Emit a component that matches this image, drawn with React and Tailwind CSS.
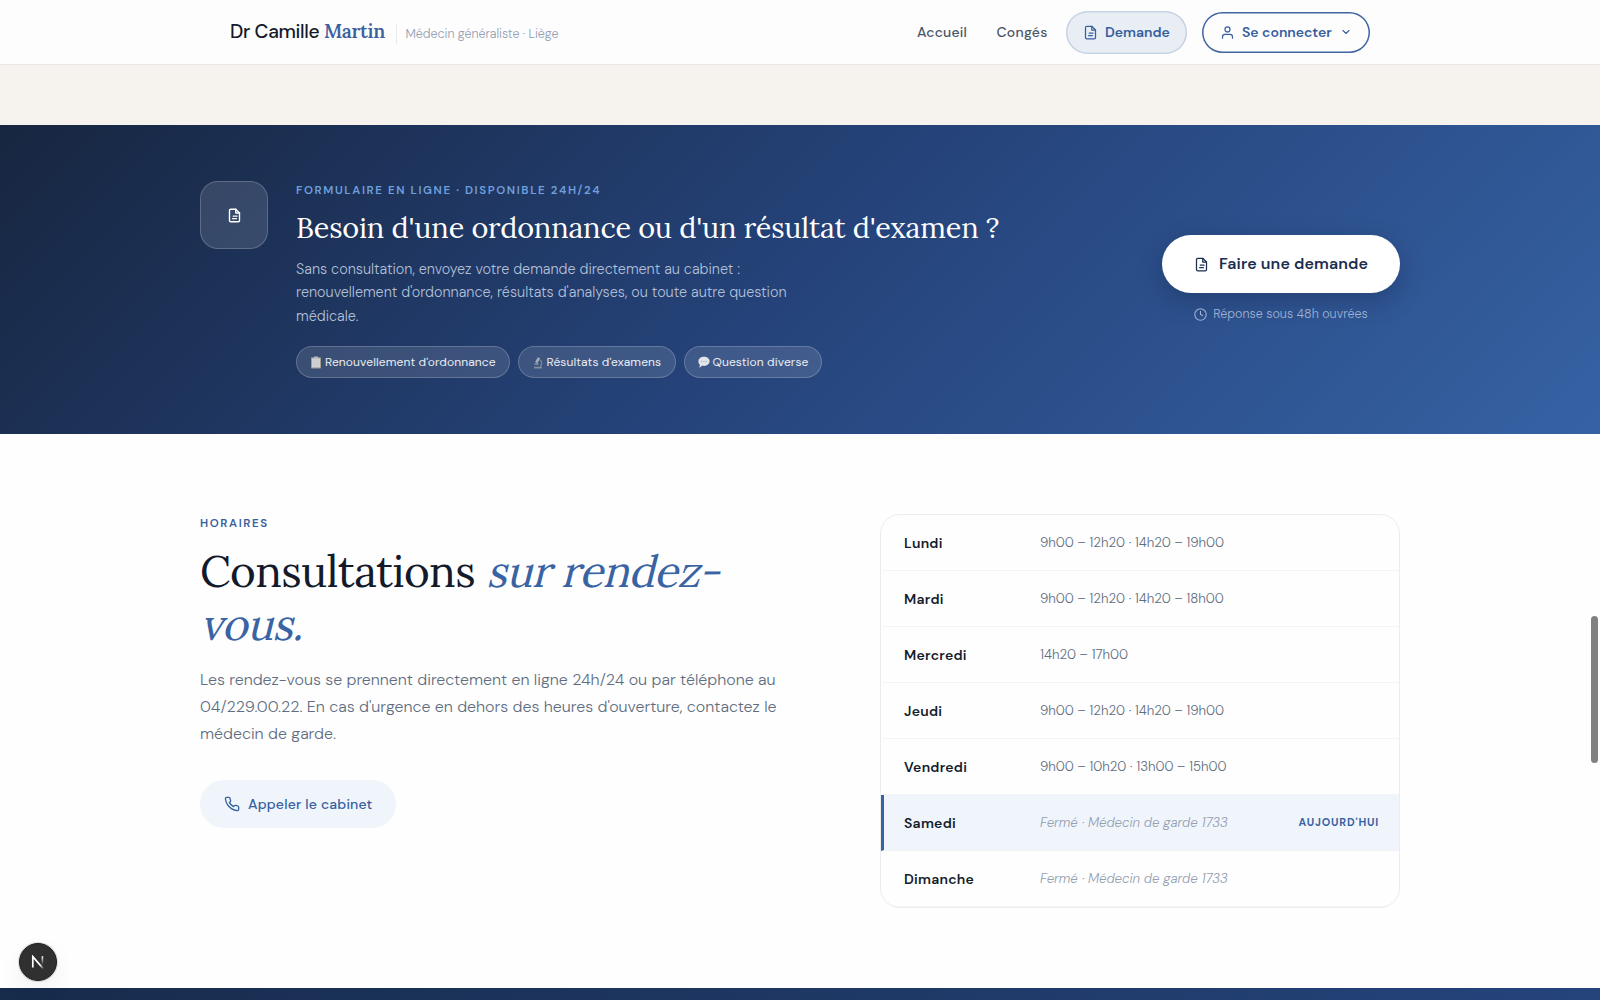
import React from "react";

function FileIcon({ size = 16, stroke = 2, className = "" }) {
  return (
    <svg width={size} height={size} viewBox="0 0 24 24" fill="none" stroke="currentColor" strokeWidth={stroke} strokeLinecap="round" strokeLinejoin="round" className={className}>
      <path d="M14 2H6a2 2 0 0 0-2 2v16a2 2 0 0 0 2 2h12a2 2 0 0 0 2-2V8z" />
      <path d="M14 2v6h6" />
      <path d="M10 13h6M9 17h6" />
    </svg>
  );
}

function UserIcon() {
  return (
    <svg width="15" height="15" viewBox="0 0 24 24" fill="none" stroke="currentColor" strokeWidth="2" strokeLinecap="round" strokeLinejoin="round">
      <path d="M20 21v-2a4 4 0 0 0-4-4H8a4 4 0 0 0-4 4v2" />
      <circle cx="12" cy="7" r="4" />
    </svg>
  );
}

function ChevronIcon() {
  return (
    <svg width="12" height="12" viewBox="0 0 24 24" fill="none" stroke="currentColor" strokeWidth="2.2" strokeLinecap="round" strokeLinejoin="round">
      <path d="M6 9l6 6 6-6" />
    </svg>
  );
}

function ClockIcon() {
  return (
    <svg width="13" height="13" viewBox="0 0 24 24" fill="none" stroke="currentColor" strokeWidth="2" strokeLinecap="round" strokeLinejoin="round">
      <circle cx="12" cy="12" r="10.5" />
      <path d="M12 6v6l4 2" />
    </svg>
  );
}

function PhoneIcon() {
  return (
    <svg width="16" height="16" viewBox="0 0 24 24" fill="none" stroke="currentColor" strokeWidth="2" strokeLinecap="round" strokeLinejoin="round">
      <path d="M22 16.92v3a2 2 0 0 1-2.18 2 19.79 19.79 0 0 1-8.63-3.07 19.5 19.5 0 0 1-6-6 19.79 19.79 0 0 1-3.07-8.67A2 2 0 0 1 4.11 2h3a2 2 0 0 1 2 1.72 12.84 12.84 0 0 0 .7 2.81 2 2 0 0 1-.45 2.11L8.09 9.91a16 16 0 0 0 6 6l1.27-1.27a2 2 0 0 1 2.11-.45 12.84 12.84 0 0 0 2.81.7A2 2 0 0 1 22 16.92z" />
    </svg>
  );
}

function ClipboardEmoji() {
  return (
    <svg width="12" height="13" viewBox="0 0 12 13">
      <rect x="1" y="1.2" width="10" height="11.2" rx="0.9" fill="#a39d94" />
      <rect x="2" y="2.4" width="8" height="9" fill="#d0d2d4" />
      <rect x="4" y="0.5" width="4" height="2" rx="0.6" fill="#b9bcc2" />
      <path d="M3 5h6M3 7h6M3 9h6" stroke="#c0c3c8" strokeWidth="0.5" />
    </svg>
  );
}

function MicroscopeEmoji() {
  return (
    <svg width="12" height="13" viewBox="0 0 12 13" fill="none">
      <path d="M5.8 1.2l2.4 1.4-2.9 4.6-2.2-1.3z" fill="#a7adb8" />
      <path d="M8 4.2c2 1 2.4 4.4 0.2 6.2" stroke="#7f8795" strokeWidth="1.3" />
      <path d="M2.6 8h4" stroke="#b5bac4" strokeWidth="1" />
      <path d="M2 11.6h8" stroke="#858d9a" strokeWidth="1.8" />
    </svg>
  );
}

function BubbleEmoji() {
  return (
    <svg width="12" height="13" viewBox="0 0 12 13">
      <path d="M6 0.8c3.2 0 5.6 1.9 5.6 4.5S9.2 9.9 6 9.9c-.8 0-1.4-.1-2-.3-.6.9-1.6 1.7-2.9 1.9.6-.8.8-1.700.7-2.700C.9 8 .4 6.700.4 5.300.4 2.700 2.800.8 6 .8z" fill="#e3e5e8" />
      <circle cx="3.6" cy="5.4" r="0.6" fill="#a2a8b3" />
      <circle cx="6" cy="5.4" r="0.6" fill="#a2a8b3" />
      <circle cx="8.4" cy="5.4" r="0.6" fill="#a2a8b3" />
    </svg>
  );
}

function Header() {
  return (
    <header className="h-[65px] shrink-0 border-b border-[#e9e8e8] bg-[#fdfdfe]">
      <div className="mx-auto flex h-[63px] w-[1140px] items-center justify-between">
        <div className="flex items-center">
          <div className="w-[155.500px] whitespace-nowrap text-[19.2px] font-medium leading-none tracking-[-0.32px] text-[#121a2b]">
            Dr Camille <span className="font-['Lora',serif] font-semibold text-[#3a619f]">Martin</span>
          </div>
          <div className="ml-[10px] mt-[5px] flex h-[20px] items-center whitespace-nowrap border-l border-[#e6e9ee] pl-[9px] text-[12.5px] font-light tracking-[-0.03px] text-[#94a0b3]">Médecin généraliste · Liège</div>
        </div>
        <nav className="flex items-center whitespace-nowrap pt-px text-[14px]">
          <span className="w-[79.5px] font-medium tracking-[0.2px] text-[#4a5567]">Accueil</span>
          <span className="w-[69.5px] font-medium tracking-[0.23px] text-[#4a5567]">Congés</span>
          <span className="flex h-[43px] w-[121px] items-center gap-[7px] rounded-full bg-[#e9eef5] pl-[17px] font-semibold text-[#36609f] shadow-[inset_0_0_0_1.5px_#c6d3e4]">
            <FileIcon size={15} />
            Demande
          </span>
          <span className="ml-[15px] flex h-[41px] w-[168px] items-center rounded-full pl-[18px] font-semibold text-[#36609f] shadow-[inset_0_0_0_1.5px_#3f64a0]">
            <UserIcon />
            <span className="ml-[7px]">Se connecter</span>
            <span className="ml-[8px]"><ChevronIcon /></span>
          </span>
        </nav>
      </div>
    </header>
  );
}

function Chip({ icon, label, className }) {
  return (
    <span className={"flex h-8 items-center gap-[3px] whitespace-nowrap rounded-full border border-white/20 bg-white/12 pl-[13px] text-[12px] tracking-[0.12px] text-white/90 " + className}>
      {icon}
      {label}
    </span>
  );
}

function RequestBanner() {
  return (
    <section className="h-[309px] shrink-0 bg-[linear-gradient(135deg,#172640_0%,#25437a_50%,#3662a4_100%)]">
      <div className="mx-auto flex h-full w-[1200px] items-center justify-between">
        <div className="flex items-start gap-7">
          <div className="flex h-[68px] w-[68px] items-center justify-center rounded-[18px] border border-white/20 bg-white/12 text-white">
            <FileIcon size={15} stroke={2.2} />
          </div>
          <div className="h-[197px]">
            <p className="mt-[1px] text-[11.52px] font-semibold leading-[17px] tracking-[1.61px] text-[#6f9fdc]">FORMULAIRE EN LIGNE · DISPONIBLE 24H/24</p>
            <h2 className="mt-[9.5px] whitespace-nowrap font-['Lora',serif] text-[28.8px] leading-[38px] tracking-[-0.19px] text-white">Besoin d'une ordonnance ou d'un résultat d'examen ?</h2>
            <p className="mt-[11px] w-[520px] text-[14.4px] font-light leading-[23.7px] text-[#b1bfd6]">
              Sans consultation, envoyez votre demande directement au cabinet :
              renouvellement d'ordonnance, résultats d'analyses, ou toute autre question
              médicale.
            </p>
            <div className="mt-[17.4px] flex gap-2">
              <Chip icon={<ClipboardEmoji />} label="Renouvellement d'ordonnance" className="w-[213.5px]" />
              <Chip icon={<MicroscopeEmoji />} label="Résultats d'examens" className="w-[158px]" />
              <Chip icon={<BubbleEmoji />} label="Question diverse" className="w-[138px]" />
            </div>
          </div>
        </div>
        <div className="flex w-[238px] flex-col items-center">
          <button className="flex h-[58px] w-[238px] items-center whitespace-nowrap rounded-full bg-white pl-[32px] text-[16px] font-semibold tracking-[0.12px] text-[#1b2d50] shadow-[0_8px_24px_rgba(10,20,45,0.25)]">
            <FileIcon size={15} />
            <span className="ml-[10px]">Faire une demande</span>
          </button>
          <div className="mt-[12px] flex items-center gap-[6px] whitespace-nowrap text-[12.5px] font-light tracking-[0.03px] text-[#9fb2d3]">
            <ClockIcon />
            Réponse sous 48h ouvrées
          </div>
        </div>
      </div>
    </section>
  );
}

const HOURS = [
  { day: "Lundi", hours: "9h00 – 12h20 · 14h20 – 19h00" },
  { day: "Mardi", hours: "9h00 – 12h20 · 14h20 – 18h00" },
  { day: "Mercredi", hours: "14h20 – 17h00" },
  { day: "Jeudi", hours: "9h00 – 12h20 · 14h20 – 19h00" },
  { day: "Vendredi", hours: "9h00 – 10h20 · 13h00 – 15h00" },
  { day: "Samedi", hours: "Fermé · Médecin de garde 1733", closed: true, today: true },
  { day: "Dimanche", hours: "Fermé · Médecin de garde 1733", closed: true },
];

function HoursTable() {
  return (
    <div className="h-[394px] w-[520px] overflow-hidden rounded-[20px] border border-[#eaecf0]">
      {HOURS.map((row) => (
        <div
          key={row.day}
          className={
            "flex h-14 items-center whitespace-nowrap border-b border-l-[3px] border-b-[#f2f4f7] pl-5 pr-5 " +
            (row.today ? "border-l-[#3763a5] bg-[#f0f5fc]" : "border-l-transparent")
          }
        >
          <span className="w-[136px] pt-[2px] text-[14px] font-semibold tracking-[0.25px] text-[#141c2c]">{row.day}</span>
          <span className={row.closed ? "flex-1 text-[13.28px] font-light italic tracking-[-0.03px] text-[#94a0b3]" : "flex-1 text-[13.28px] font-light text-[#606d80]"}>{row.hours}</span>
          {row.today && <span className="text-[10.9px] font-bold tracking-[0.8px] text-[#3a63a3]">AUJOURD'HUI</span>}
        </div>
      ))}
    </div>
  );
}

function Schedule() {
  return (
    <section className="h-[554px] shrink-0 bg-[#fefefe]">
      <div className="mx-auto flex w-[1200px] justify-between pt-20">
        <div className="w-[600px]">
          <p className="pt-px text-[11.52px] font-semibold leading-[18px] tracking-[1.61px] text-[#36609f]">HORAIRES</p>
          <h2 className="mt-[12px] whitespace-nowrap font-['Lora',serif] text-[44px] leading-[52.8px] tracking-[-0.66px] text-[#121a2b]">
            Consultations <span className="inline-block origin-[0_43px] skew-x-[-14deg] text-[#3a63a3]">sur rendez-</span>
            <br />
            <span className="inline-block origin-[0_43px] skew-x-[-14deg] text-[#3a63a3]">vous.</span>
          </h2>
          <p className="mt-[15px] w-[585px] text-[16px] font-light leading-[27.2px] text-[#606d80]">
            Les rendez-vous se prennent directement en ligne 24h/24 ou par téléphone au
            04/229.00.22. En cas d'urgence en dehors des heures d'ouverture, contactez le
            médecin de garde.
          </p>
          <button className="mt-[33px] flex h-12 w-[196px] items-center whitespace-nowrap rounded-full bg-[#f0f5fc] pl-6 text-[14px] font-medium tracking-[0.2px] text-[#36609f]">
            <PhoneIcon />
            <span className="ml-2">Appeler le cabinet</span>
          </button>
        </div>
        <HoursTable />
      </div>
    </section>
  );
}

export default function App() {
  return (
    <div className="relative flex h-[1000px] w-[1600px] flex-col overflow-hidden bg-[#f6f3ee] font-['DM_Sans','Inter',sans-serif]">
      <Header />
      <div className="h-[60px] shrink-0 bg-[#f6f3ee]" />
      <RequestBanner />
      <Schedule />
      <div className="h-[12px] shrink-0 bg-[linear-gradient(90deg,#172b4b_0%,#25447c_100%)]" />

      <div className="absolute left-[19px] top-[943px] flex h-[38px] w-[38px] items-center justify-center rounded-full border border-[#1f1f1f] bg-[#303030] shadow-[0_0_0_1px_rgba(120,120,120,0.25),0_10px_24px_rgba(0,0,0,0.06)]">
        <svg width="14" height="14" viewBox="0 0 14 14" fill="none">
          <defs>
            <linearGradient id="fadeDiagonal" x1="1" y1="1" x2="13" y2="13" gradientUnits="userSpaceOnUse">
              <stop offset="0.7" stopColor="#fff" />
              <stop offset="1" stopColor="#fff" stopOpacity="0.1" />
            </linearGradient>
            <linearGradient id="fadeStem" x1="0" y1="1" x2="0" y2="10" gradientUnits="userSpaceOnUse">
              <stop stopColor="#fff" />
              <stop offset="1" stopColor="#fff" stopOpacity="0" />
            </linearGradient>
          </defs>
          <path d="M1.8 12.5V1.6L12.2 13.6" stroke="url(#fadeDiagonal)" strokeWidth="1.7" />
          <rect x="10.6" y="1.2" width="1.6" height="8.8" fill="url(#fadeStem)" />
        </svg>
      </div>
      <div className="absolute left-[1591px] top-[616px] h-[147px] w-[7px] rounded-full bg-[#808080]" />
    </div>
  );
}
